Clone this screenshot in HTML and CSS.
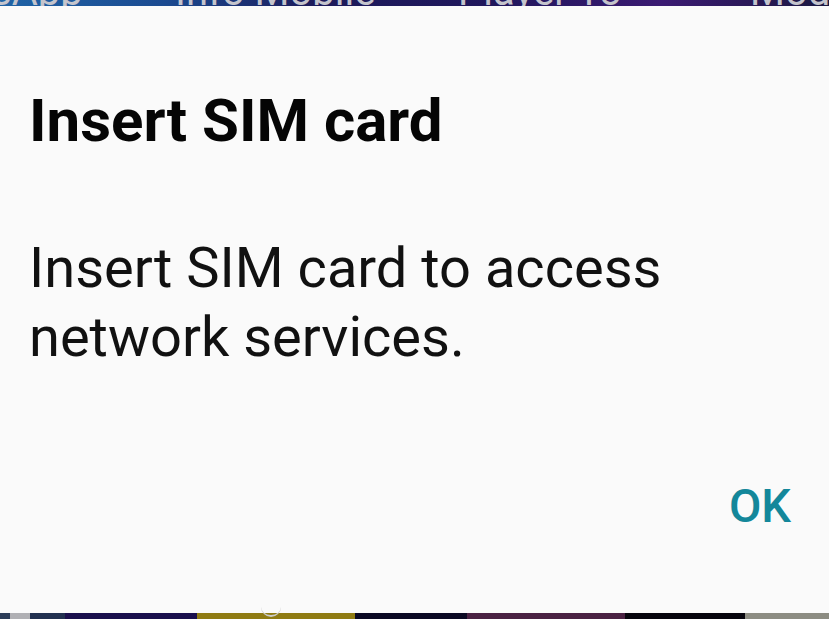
FILE: index.html
```html
<!DOCTYPE html>
<html lang="en">
<head>
    <meta charset="UTF-8">
    <meta name="viewport" content="width=device-width, initial-scale=1.0">
    <title>Insert SIM card</title>
    <link rel="stylesheet" href="styles.css">
</head>
<body>
    <div class="screen">
        <div class="wallpaper-top">
            <span class="app-label label-1">tsApp</span>
            <span class="app-label label-2">Info Mobile</span>
            <span class="app-label label-3">Player To</span>
            <span class="app-label label-4">Mod</span>
        </div>

        <div class="dialog">
            <h1 class="dialog-title">Insert SIM card</h1>
            <p class="dialog-message">Insert SIM card to access network services.</p>
            <div class="dialog-actions">
                <button class="dialog-button">OK</button>
            </div>
        </div>

        <div class="wallpaper-bottom">
            <span class="seg seg-1"></span>
            <span class="seg seg-2"></span>
            <span class="seg seg-3"></span>
            <span class="seg seg-4"></span>
            <span class="seg seg-5"><span class="arc"></span></span>
            <span class="seg seg-6"></span>
            <span class="seg seg-7"></span>
            <span class="seg seg-8"></span>
            <span class="seg seg-9"></span>
        </div>
    </div>
</body>
</html>
```

FILE: styles.css
```css
body {
    margin: 0;
    font-family: Roboto, "Noto Sans", sans-serif;
    background-color: #111;
}
.screen {
    width: 829px;
    height: 619px;
    display: flex;
    flex-direction: column;
    overflow: hidden;
}

/* strip of home screen above the dialog */
.wallpaper-top {
    height: 6px;
    flex: none;
    display: flex;
    align-items: flex-end;
    overflow: hidden;
    background: linear-gradient(90deg, #1f63a6 0%, #1b4a90 20%, #1c1a5a 38%, #20175c 60%, #3b1a72 80%, #1a1840 100%);
}
.app-label {
    flex: none;
    font-size: 40px;
    line-height: 40px;
    margin-bottom: -6px;
    color: #c4c4cc;
    white-space: nowrap;
}
.label-1 { margin-left: -22px; width: 197px; }
.label-2 { width: 283px; }
.label-3 { width: 292px; }

/* the dialog */
.dialog {
    flex: 1;
    background-color: #fafafa;
    display: flex;
    flex-direction: column;
    padding: 0 38px 0 29px;
}
.dialog-title {
    margin: 79px 0 0;
    font-size: 60px;
    font-weight: 700;
    line-height: 72px;
    color: #050505;
}
.dialog-message {
    margin: 77px 0 0;
    font-size: 56px;
    line-height: 69px;
    color: #111;
    max-width: 680px;
}
.dialog-actions {
    display: flex;
    justify-content: flex-end;
    margin-top: 106px;
}
.dialog-button {
    border: none;
    background: none;
    padding: 0;
    font-family: inherit;
    font-size: 47px;
    font-weight: 500;
    line-height: 56px;
    color: #13879a;
    cursor: pointer;
}

/* strip of dock below the dialog */
.wallpaper-bottom {
    height: 6px;
    flex: none;
    display: flex;
}
.seg { height: 100%; flex: none; }
.seg-1 { width: 10px; background-color: #2c3c58; }
.seg-2 { width: 20px; background-color: #b0b0b4; }
.seg-3 { width: 35px; background-color: #21304f; }
.seg-4 { width: 132px; background-color: #1a0f4c; }
.seg-5 { width: 158px; background-color: #8f7b12; position: relative; }
.seg-6 { width: 112px; background-color: #0a0822; }
.seg-7 { width: 158px; background-color: #4a2142; }
.seg-8 { width: 120px; background-color: #06040c; }
.seg-9 { width: 84px; background-color: #8c8c82; }
.arc {
    position: absolute;
    left: 64px;
    top: -6px;
    width: 20px;
    height: 8px;
    border-bottom: 2px solid #ccc;
    border-radius: 0 0 10px 10px;
}
```
